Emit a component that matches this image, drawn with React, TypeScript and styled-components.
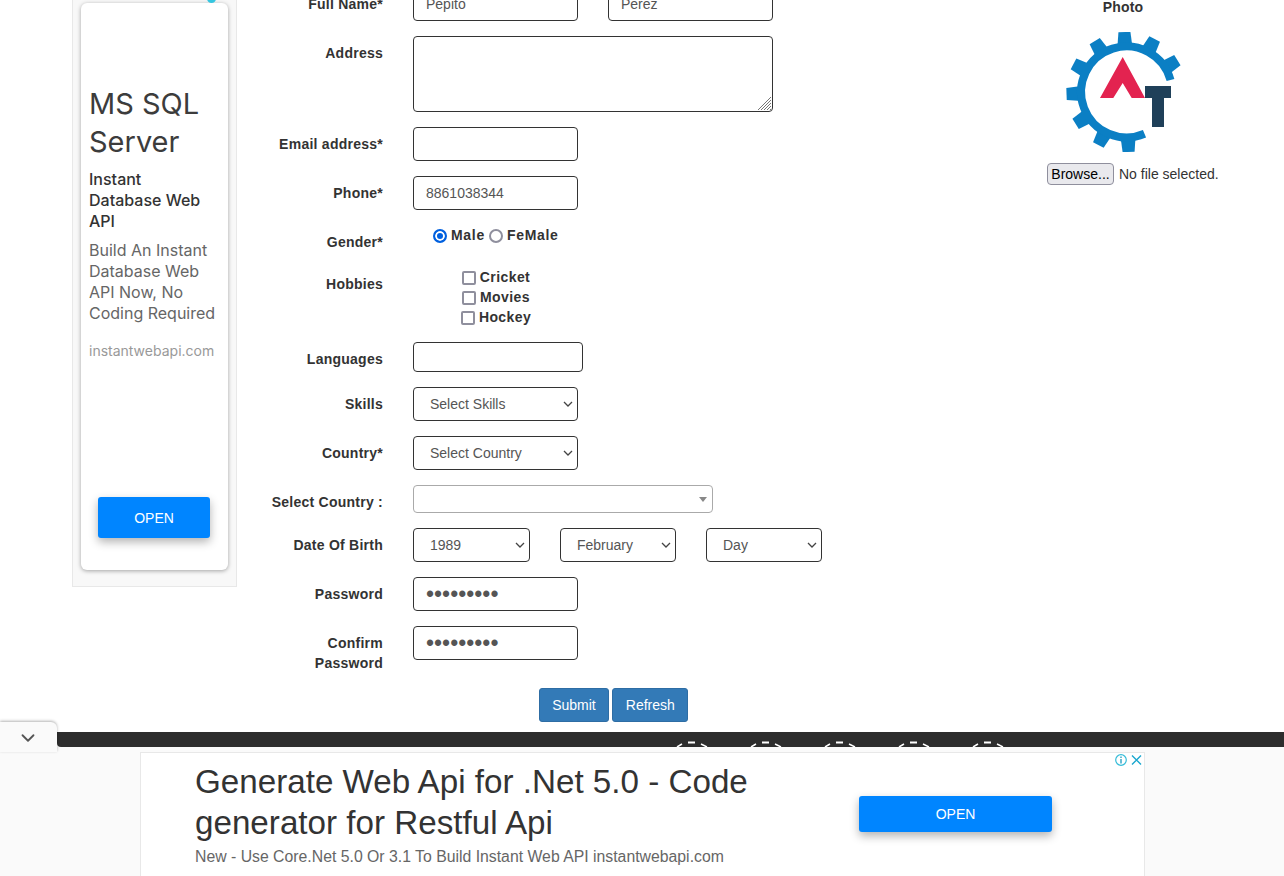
import styled, { createGlobalStyle } from "styled-components";
import { ChevronDown } from "lucide-react";

const GlobalStyle = createGlobalStyle`
  html, body {
    margin: 0;
    padding: 0;
    background: #fff;
    overflow: hidden;
  }
  * {
    box-sizing: border-box;
  }
`;

const gearTeeth = [0, 30, 60, 180, 210, 240, 270, 300, 330];

const selectChevron =
  "url(\"data:image/svg+xml,%3Csvg xmlns='http://www.w3.org/2000/svg' width='10' height='6'%3E%3Cpath d='M1 1l4 4 4-4' fill='none' stroke='%23444' stroke-width='1.3'/%3E%3C/svg%3E\")";

function Logo() {
  return (
    <LogoSvg viewBox="0 0 120 120">
      <g transform="translate(3.5 0)">
        {gearTeeth.map((deg) => (
          <polygon
            key={deg}
            points="54,0 66,0 67.5,15 52.5,15"
            fill="#0b7fc4"
            transform={`rotate(${deg - 2} 60 60)`}
          />
        ))}
        <path
          d="M 104 48 A 45.5 45.5 0 1 0 78 101.8"
          fill="none"
          stroke="#0b7fc4"
          strokeWidth="8"
        />
      </g>
      <polygon points="59.7,25 82,66 68.7,66 59.7,51 50.3,66 37,66" fill="#e32350" />
      <polygon points="82,54 108,54 108,66 101,66 101,95 89,95 89,66 82,66" fill="#1f4059" />
    </LogoSvg>
  );
}

function CodeGlyph() {
  return (
    <svg width="36" height="15" viewBox="0 0 36 15">
      <path d="M14 10.5h7" stroke="#fff" strokeWidth="2" />
      <path d="M3 15l5-3M33 15l-6-3" stroke="#fff" strokeWidth="1.5" fill="none" />
    </svg>
  );
}

export default function App() {
  return (
    <>
      <GlobalStyle />
      <Viewport>
        <Columns>
          <SideAd>
            <AdDot />
            <AdCard>
              <AdTitle>MS SQL Server</AdTitle>
              <AdSubtitle>Instant Database Web API</AdSubtitle>
              <AdBody>Build An Instant Database Web API Now, No Coding Required</AdBody>
              <AdDomain>instantwebapi.com</AdDomain>
              <AdButton>OPEN</AdButton>
            </AdCard>
          </SideAd>

          <Form>
            <Row>
              <Label>Full Name*</Label>
              <Fields>
                <TextInput defaultValue="Pepito" />
                <TextInput defaultValue="Perez" />
              </Fields>
            </Row>
            <Row>
              <Label>Address</Label>
              <Fields>
                <AreaWrap>
                  <TextArea />
                  <ResizeGrip viewBox="0 0 15 15">
                    <path
                      d="M14 1L1 14M14 4L4 14M14 7L7 14M14 10L10 14M14 13L13 14"
                      stroke="#777"
                      strokeWidth="1"
                      fill="none"
                    />
                  </ResizeGrip>
                </AreaWrap>
              </Fields>
            </Row>
            <Row>
              <Label>Email address*</Label>
              <Fields>
                <TextInput />
              </Fields>
            </Row>
            <Row>
              <Label>Phone*</Label>
              <Fields>
                <TextInput defaultValue="8861038344" />
              </Fields>
            </Row>
            <Row>
              <Label>Gender*</Label>
              <RadioGroup>
                <Radio type="radio" name="gender" defaultChecked />
                <RadioText>Male</RadioText>
                <Radio type="radio" name="gender" />
                <RadioText>FeMale</RadioText>
              </RadioGroup>
            </Row>
            <Row>
              <Label>Hobbies</Label>
              <CheckGroup>
                {["Cricket", "Movies", "Hockey"].map((hobby) => (
                  <CheckLine key={hobby}>
                    <Check type="checkbox" />
                    <OptionText>{hobby}</OptionText>
                  </CheckLine>
                ))}
              </CheckGroup>
            </Row>
            <Row>
              <Label>Languages</Label>
              <Fields>
                <TagInput />
              </Fields>
            </Row>
            <Row>
              <Label>Skills</Label>
              <Fields>
                <Select $width={165}>
                  <option>Select Skills</option>
                </Select>
              </Fields>
            </Row>
            <Row>
              <Label>Country*</Label>
              <Fields>
                <Select $width={165}>
                  <option>Select Country</option>
                </Select>
              </Fields>
            </Row>
            <Row>
              <Label>Select Country :</Label>
              <Fields>
                <Combo>
                  <ComboArrow />
                </Combo>
              </Fields>
            </Row>
            <Row>
              <Label>Date Of Birth</Label>
              <Fields>
                <Select $width={117}>
                  <option>1989</option>
                </Select>
                <Select $width={116}>
                  <option>February</option>
                </Select>
                <Select $width={116}>
                  <option>Day</option>
                </Select>
              </Fields>
            </Row>
            <Row>
              <Label>Password</Label>
              <Fields>
                <PasswordInput type="password" defaultValue="123456789" />
              </Fields>
            </Row>
            <Row>
              <Label>Confirm Password</Label>
              <Fields>
                <PasswordInput type="password" defaultValue="123456789" />
              </Fields>
            </Row>
            <Actions>
              <ActionButton type="button">Submit</ActionButton>
              <ActionButton type="button">Refresh</ActionButton>
            </Actions>
          </Form>

          <PhotoColumn>
            <PhotoLabel>Photo</PhotoLabel>
            <Logo />
            <FileRow>
              <BrowseButton type="button">Browse...</BrowseButton>
              <span>No file selected.</span>
            </FileRow>
          </PhotoColumn>
        </Columns>

        <DarkBar>
          <CodeGlyph />
          <CodeGlyph />
          <CodeGlyph />
          <CodeGlyph />
          <CodeGlyph />
        </DarkBar>

        <AnchorAd>
          <CollapseTab>
            <ChevronDown size={22} color="#555" strokeWidth={2} />
          </CollapseTab>
          <AnchorBox>
            <AnchorClose>
              <svg width="30" height="14" viewBox="0 0 30 14">
                <circle cx="7" cy="7" r="5.3" fill="none" stroke="#35bcd8" strokeWidth="1.2" />
                <path d="M7 3.5v1.4M7 6v4.4" stroke="#1a9cc0" strokeWidth="1.3" />
                <path d="M18 2.5l9 9M27 2.5l-9 9" stroke="#1aa7cf" strokeWidth="1.4" />
              </svg>
            </AnchorClose>
            <AnchorText>
              <AnchorTitle>Generate Web Api for .Net 5.0 - Code generator for Restful Api</AnchorTitle>
              <AnchorSub>New - Use Core.Net 5.0 Or 3.1 To Build Instant Web API instantwebapi.com</AnchorSub>
            </AnchorText>
            <AnchorButton>OPEN</AnchorButton>
          </AnchorBox>
        </AnchorAd>
      </Viewport>
    </>
  );
}

const Viewport = styled.div`
  height: 876px;
  overflow: hidden;
  font-family: "Liberation Sans", Arial, sans-serif;
  font-size: 14px;
  line-height: 20px;
  color: #333;
`;

const Columns = styled.div`
  display: flex;
  align-items: flex-start;
  margin-top: -13px;
  padding-left: 72px;
`;

const SideAd = styled.aside`
  position: relative;
  flex: none;
  width: 165px;
  height: 600px;
  padding: 15px 8px;
  background: #f8f8f8;
  border: 1px solid #e8e8e8;
`;

const AdDot = styled.span`
  position: absolute;
  top: 6px;
  right: 20px;
  width: 9px;
  height: 9px;
  border-radius: 50%;
  background: #35c6e0;
`;

const AdCard = styled.div`
  display: flex;
  flex-direction: column;
  height: 567px;
  padding: 82px 8px 32px;
  background: #fff;
  border-radius: 6px;
  box-shadow: 0 1px 4px rgba(0, 0, 0, 0.35);
  font-family: Inter, sans-serif;
`;

const AdTitle = styled.div`
  font-size: 29px;
  line-height: 38px;
  color: #3c3c3c;
  margin-bottom: 8px;
`;

const AdSubtitle = styled.div`
  max-width: 122px;
  font-size: 16px;
  line-height: 21px;
  font-weight: 500;
  color: #333;
  margin-bottom: 8px;
`;

const AdBody = styled.div`
  font-size: 16px;
  line-height: 21px;
  color: #666;
  margin-bottom: 17px;
`;

const AdDomain = styled.div`
  font-size: 14px;
  line-height: 20px;
  color: #999;
`;

const AdButton = styled.div`
  align-self: flex-start;
  width: 112px;
  height: 41px;
  margin-top: auto;
  margin-left: 9px;
  background: #0085ff;
  border-radius: 3px;
  box-shadow: 0 4px 10px rgba(0, 0, 0, 0.3);
  color: #fff;
  font-family: "Liberation Sans", Arial, sans-serif;
  font-size: 14px;
  line-height: 43px;
  text-align: center;
`;

const Form = styled.form`
  flex: none;
  width: 753px;
`;

const Row = styled.div`
  display: grid;
  grid-template-columns: 146px 1fr;
  column-gap: 30px;
  margin-bottom: 15px;
`;

const Label = styled.label`
  justify-self: end;
  max-width: 112px;
  padding-top: 7px;
  font-weight: 700;
  letter-spacing: 0.25px;
  text-align: right;
`;

const Fields = styled.div`
  display: flex;
  gap: 30px;
`;

const TextInput = styled.input`
  width: 165px;
  height: 34px;
  padding: 6px 12px;
  border: 1px solid #333;
  border-radius: 4px;
  background: #fff;
  color: #555;
  font: 14px "Liberation Sans", Arial, sans-serif;
`;

const PasswordInput = styled(TextInput)`
  font-size: 23px;
  padding: 0 12px;
`;

const AreaWrap = styled.div`
  position: relative;
  width: 360px;
  height: 76px;
`;

const TextArea = styled.textarea`
  display: block;
  width: 100%;
  height: 100%;
  padding: 6px 12px;
  border: 1px solid #333;
  border-radius: 4px;
  color: #555;
  font: 14px "Liberation Sans", Arial, sans-serif;
  resize: none;
`;

const ResizeGrip = styled.svg`
  position: absolute;
  right: 1px;
  bottom: 1px;
  width: 15px;
  height: 15px;
`;

const TagInput = styled(TextInput)`
  width: 170px;
  height: 30px;
`;

const Select = styled.select<{ $width: number }>`
  appearance: none;
  width: ${(props) => props.$width}px;
  height: 34px;
  padding: 6px 20px 6px 16px;
  border: 1px solid #333;
  border-radius: 4px;
  background: #fff ${selectChevron} no-repeat right 4px center;
  color: #555;
  font: 14px "Liberation Sans", Arial, sans-serif;
`;

const Combo = styled.div`
  display: flex;
  align-items: center;
  justify-content: flex-end;
  width: 300px;
  height: 28px;
  padding-right: 5px;
  border: 1px solid #aaa;
  border-radius: 4px;
  background: #fff;
`;

const ComboArrow = styled.span`
  width: 0;
  height: 0;
  border-left: 4px solid transparent;
  border-right: 4px solid transparent;
  border-top: 5px solid #888;
`;

const RadioGroup = styled.div`
  display: flex;
  align-items: center;
  align-self: start;
  height: 20px;
  padding-left: 20px;
`;

const Radio = styled.input`
  appearance: none;
  flex: none;
  width: 14px;
  height: 14px;
  margin: 1px 4px 0 4px;
  border: 2px solid #8f8f9d;
  border-radius: 50%;
  background: #fff;

  &:first-child {
    margin-left: 0;
  }

  &:checked {
    border: 2px solid #0060df;
    box-shadow: inset 0 0 0 2px #fff;
    background: #0060df;
  }
`;

const OptionText = styled.span`
  font-weight: 700;
  letter-spacing: 0.4px;
`;

const RadioText = styled(OptionText)`
  letter-spacing: 0.7px;
`;

const CheckGroup = styled.div`
  width: 166px;
  text-align: center;
`;

const CheckLine = styled.div`
  display: flex;
  align-items: center;
  justify-content: center;
  height: 20px;
`;

const Check = styled.input`
  appearance: none;
  flex: none;
  width: 14px;
  height: 14px;
  margin: 1px 4px 0 0;
  border: 2px solid #8f8f9d;
  border-radius: 2px;
  background: #fff;
`;

const Actions = styled.div`
  display: flex;
  justify-content: center;
  gap: 3px;
  margin-top: 0;
`;

const ActionButton = styled.button`
  height: 34px;
  padding: 6px 12.5px;
  border: 1px solid #2e6da4;
  border-radius: 3px;
  background: #337ab7;
  color: #fff;
  font: 14px "Liberation Sans", Arial, sans-serif;
`;

const PhotoColumn = styled.div`
  display: flex;
  flex: none;
  flex-direction: column;
  align-items: center;
  width: 152px;
  margin-left: 57px;
  padding-top: 10px;
`;

const PhotoLabel = styled.div`
  font-weight: 700;
  letter-spacing: 0.15px;
  margin-bottom: 15px;
`;

const LogoSvg = styled.svg`
  display: block;
  width: 120px;
  height: 120px;
  margin-bottom: 11px;
`;

const FileRow = styled.div`
  display: flex;
  align-items: center;
  gap: 5px;
  align-self: flex-start;
  white-space: nowrap;
`;

const BrowseButton = styled.button`
  width: 67px;
  height: 22px;
  padding: 0;
  border: 1px solid #8f8f9d;
  border-radius: 4px;
  background: #e9e9ed;
  color: #000;
  font: 14px "Liberation Sans", Arial, sans-serif;
`;

const DarkBar = styled.div`
  display: flex;
  gap: 38px;
  height: 15px;
  margin: 10px 0 0 57px;
  padding-left: 617px;
  overflow: hidden;
  background: #2d2d2d;
  border-bottom-left-radius: 4px;
`;

const AnchorAd = styled.div`
  position: fixed;
  left: 0;
  right: 0;
  bottom: 0;
  height: 129px;
  padding-top: 5px;
  background: #fafafa;
`;

const CollapseTab = styled.div`
  position: absolute;
  left: 0;
  top: -25px;
  display: flex;
  align-items: center;
  justify-content: center;
  width: 57px;
  height: 30px;
  padding: 1px 2px 0 0;
  background: #fafafa;
  border-top-right-radius: 6px;
  box-shadow: 0 -1px 3px rgba(0, 0, 0, 0.3);
`;

const AnchorBox = styled.div`
  position: relative;
  display: flex;
  height: 124px;
  width: 1005px;
  margin-left: 140px;
  padding: 8px 0 0 54px;
  background: #fff;
  border: 1px solid #e8e8e8;
  border-bottom: none;
`;

const AnchorClose = styled.div`
  position: absolute;
  top: 0;
  right: 0;
  display: flex;
  line-height: 0;
`;

const AnchorText = styled.div`
  width: 664px;
`;

const AnchorTitle = styled.div`
  font-size: 33.2px;
  line-height: 41px;
  color: #333;
`;

const AnchorSub = styled.div`
  margin-top: 4px;
  font-size: 15.8px;
  line-height: 20px;
  color: #666;
`;

const AnchorButton = styled.div`
  align-self: flex-start;
  width: 193px;
  height: 36px;
  margin-top: 35px;
  background: #0085ff;
  border-radius: 3px;
  box-shadow: 0 4px 10px rgba(0, 0, 0, 0.3);
  color: #fff;
  font-size: 14px;
  line-height: 36px;
  text-align: center;
`;
